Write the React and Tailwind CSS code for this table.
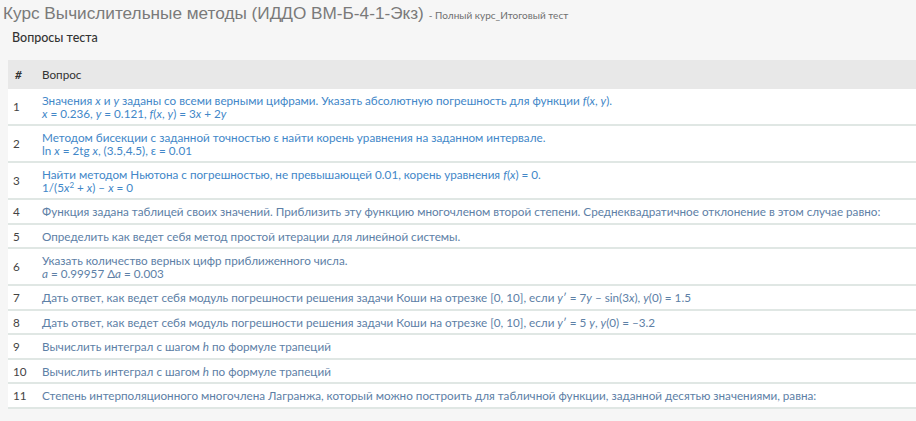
import React from "react";

const I = ({ children }) => <i className="italic">{children}</i>;

const rows = [
  {
    n: "1",
    c: "text-[#4287c8]",
    q: (
      <>
        Значения <I>x</I> и <I>y</I> заданы со всеми верными цифрами. Указать абсолютную погрешность для функции <I>f</I>(<I>x</I>, <I>y</I>).
        <br />
        <I>x</I> = 0.236, <I>y</I> = 0.121, <I>f</I>(<I>x</I>, <I>y</I>) = 3<I>x</I> + 2<I>y</I>
      </>
    ),
  },
  {
    n: "2",
    c: "text-[#4287c8]",
    q: (
      <>
        Методом бисекции с заданной точностью ε найти корень уравнения на заданном интервале.
        <br />
        ln <I>x</I> = 2tg <I>x</I>, (3.5,4.5), ε = 0.01
      </>
    ),
  },
  {
    n: "3",
    c: "text-[#4287c8]",
    q: (
      <>
        Найти методом Ньютона с погрешностью, не превышающей 0.01, корень уравнения <I>f</I>(<I>x</I>) = 0.
        <br />
        1/(5<I>x</I>
        <sup className="text-[8px] leading-none">2</sup> + <I>x</I>) – <I>x</I> = 0
      </>
    ),
  },
  {
    n: "4",
    c: "text-[#5d80a6]",
    q: "Функция задана таблицей своих значений. Приблизить эту функцию многочленом второй степени. Среднеквадратичное отклонение в этом случае равно:",
  },
  {
    n: "5",
    c: "text-[#5d80a6]",
    q: "Определить как ведет себя метод простой итерации для линейной системы.",
  },
  {
    n: "6",
    c: "text-[#5d80a6]",
    q: (
      <>
        Указать количество верных цифр приближенного числа.
        <br />
        <I>a</I> = 0.99957 Δ<I>a</I> = 0.003
      </>
    ),
  },
  {
    n: "7",
    c: "text-[#5d80a6]",
    q: (
      <>
        Дать ответ, как ведет себя модуль погрешности решения задачи Коши на отрезке [0, 10], если <I>y</I>′ = 7<I>y</I> – sin(3<I>x</I>), <I>y</I>(0) = 1.5
      </>
    ),
  },
  {
    n: "8",
    c: "text-[#5d80a6]",
    q: (
      <>
        Дать ответ, как ведет себя модуль погрешности решения задачи Коши на отрезке [0, 10], если <I>y</I>′ = 5 <I>y</I>, <I>y</I>(0) = –3.2
      </>
    ),
  },
  {
    n: "9",
    c: "text-[#5d80a6]",
    q: (
      <>
        Вычислить интеграл с шагом <I>h</I> по формуле трапеций
      </>
    ),
  },
  {
    n: "10",
    c: "text-[#5d80a6]",
    q: (
      <>
        Вычислить интеграл с шагом <I>h</I> по формуле трапеций
      </>
    ),
  },
  {
    n: "11",
    c: "text-[#5d80a6]",
    q: "Степень интерполяционного многочлена Лагранжа, который можно построить для табличной функции, заданной десятью значениями, равна:",
  },
];

export default function App() {
  return (
    <div className="w-[916px] h-[421px] overflow-hidden bg-[#f6f6f6] font-['Lato','Open_Sans',sans-serif]">
      <div className="pl-[3px] pt-[1px] h-[24px] flex items-baseline text-[#7a7a7a] font-['Liberation_Sans',sans-serif] whitespace-nowrap">
        <span className="text-[17.2px]">Курс Вычислительные методы (ИДДО ВМ-Б-4-1-Экз)</span>
        <span className="text-[10px] ml-[5px] text-[#6f6f6f] font-['Lato',sans-serif]">- Полный курс_Итоговый тест</span>
      </div>
      <div className="pl-[12px] pt-[5px] h-[36px] text-[12.5px] text-[#333] font-medium">Вопросы теста</div>
      <div className="ml-[8px] bg-white">
        <div className="flex h-[29px] items-center bg-[#e8e8e8] text-[11.7px] text-[#333]">
          <div className="w-[34px] pl-[7px] italic font-bold">#</div>
          <div>Вопрос</div>
        </div>
        {rows.map((r) => (
          <div key={r.n} className="flex items-center border-b-2 border-[#e0e7e4] py-[5px] text-[11.7px] leading-[12.5px]">
            <div className="w-[34px] pl-[5px] text-[#444]">{r.n}</div>
            <div className={`${r.c} whitespace-nowrap`}>{r.q}</div>
          </div>
        ))}
      </div>
    </div>
  );
}
